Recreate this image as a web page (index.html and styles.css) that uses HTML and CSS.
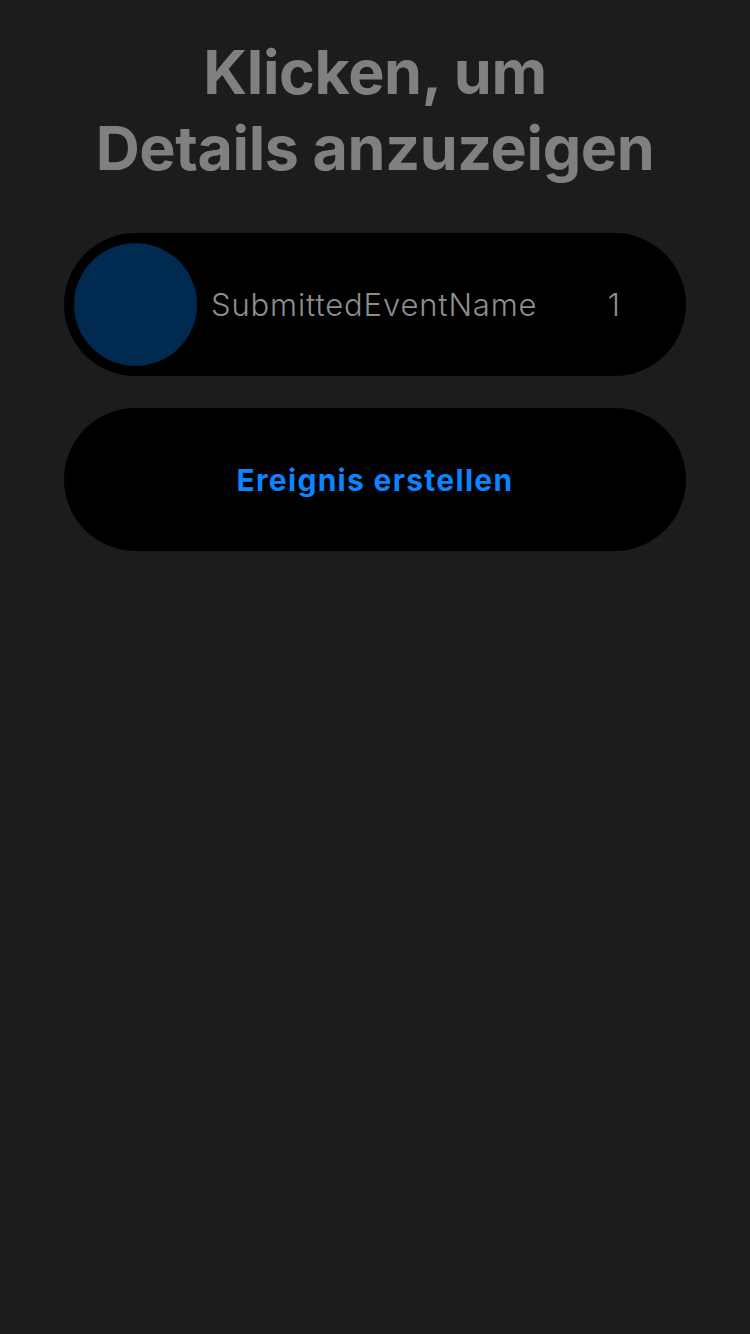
FILE: index.html
```html
<!DOCTYPE html>
<html lang="de">
<head>
<meta charset="utf-8">
<link rel="stylesheet" href="styles.css">
</head>
<body>
<main class="screen">
  <h1 class="title">Klicken, um<br>Details anzuzeigen</h1>
  <div class="event-row">
    <div class="avatar"></div>
    <span class="event-name">SubmittedEventName</span>
    <span class="event-count">1</span>
  </div>
  <button class="create-btn">Ereignis erstellen</button>
</main>
</body>
</html>
```

FILE: styles.css
```css
html, body {
  margin: 0;
  padding: 0;
  background: #1c1c1e;
}
body {
  width: 750px;
  height: 1334px;
  font-family: Inter, "Noto Sans", sans-serif;
}
.screen {
  display: flex;
  flex-direction: column;
  align-items: center;
  padding: 34px 64px 0;
}
.title {
  margin: 0;
  font-size: 61px;
  line-height: 76px;
  font-weight: 700;
  color: #808080;
  text-align: center;
  letter-spacing: -0.4px;
}
.event-row {
  margin-top: 47px;
  width: 622px;
  height: 143px;
  box-sizing: border-box;
  background: #000;
  border-radius: 72px;
  display: flex;
  align-items: center;
  padding: 0 66px 0 10px;
}
.avatar {
  width: 123px;
  height: 123px;
  border-radius: 50%;
  background: #002a4f;
  flex-shrink: 0;
}
.event-name {
  margin-left: 14px;
  font-size: 31px;
  font-weight: 300;
  letter-spacing: 0.85px;
  color: #8e8e8e;
  flex: 1;
}
.event-count {
  font-size: 31px;
  font-weight: 300;
  color: #8e8e8e;
}
.create-btn {
  margin-top: 32px;
  width: 622px;
  height: 143px;
  border: none;
  background: #000;
  border-radius: 72px;
  font-family: Inter, "Noto Sans", sans-serif;
  font-size: 30px;
  font-weight: 700;
  letter-spacing: 1.3px;
  color: #0a84ff;
  padding: 0;
}
```
